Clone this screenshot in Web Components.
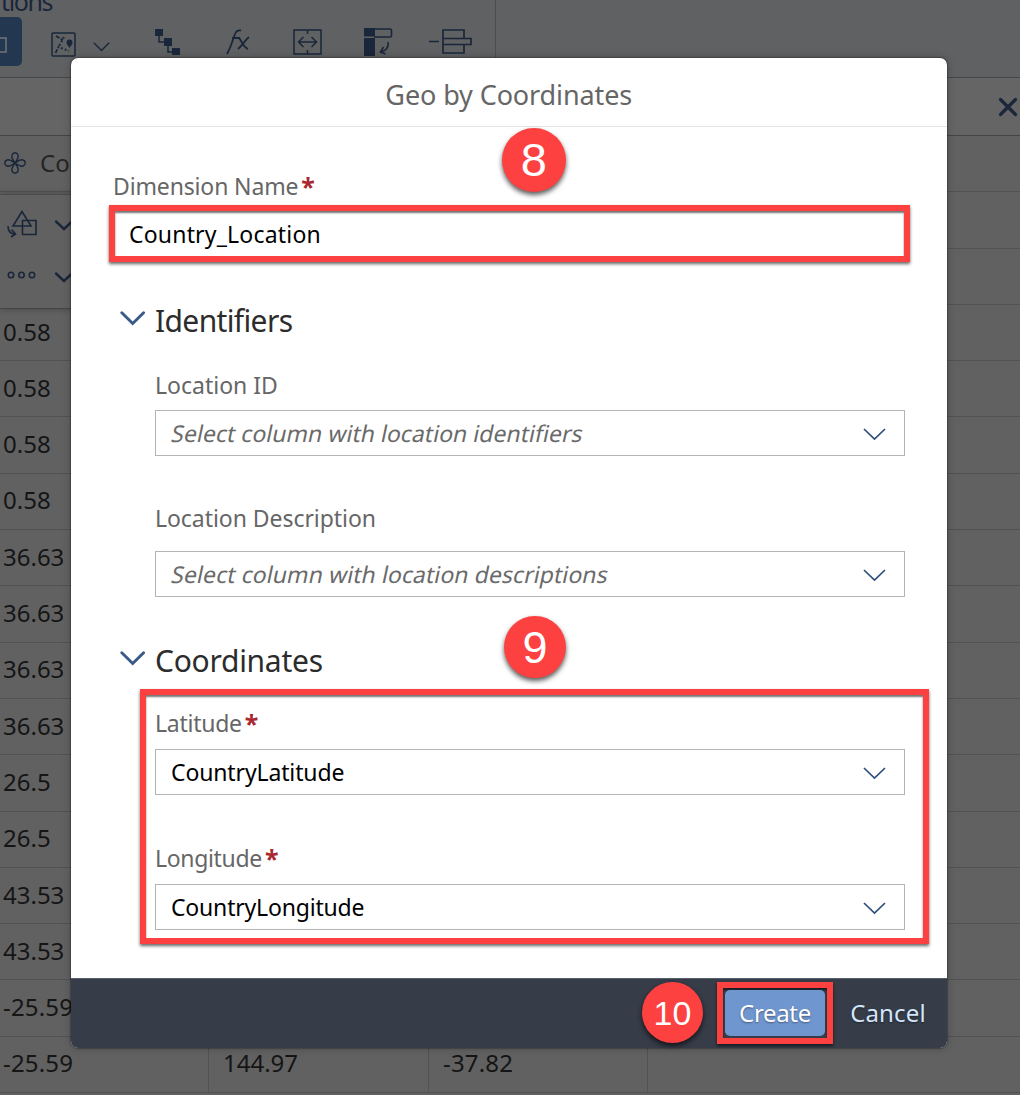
<!DOCTYPE html>
<html lang="en">
<head>
<meta charset="utf-8">
<title>Geo by Coordinates</title>
<style>
html,body{margin:0;padding:0;overflow:hidden}
body{font-family:"Noto Sans","Liberation Sans",sans-serif;width:1020px;height:1095px;background:#606060}
</style>
</head>
<body>
<geo-app></geo-app>
<script>
const define = (name, html, init) => customElements.define(name, class extends HTMLElement {
  constructor() {
    super();
    this.attachShadow({mode: 'open'}).innerHTML = html;
  }
  connectedCallback() { if (init) init.call(this, this.shadowRoot); }
});

/* One line of text set to a given width by tracking. */
define('fit-text', `<style>:host{display:block;white-space:nowrap;line-height:30px}span{display:inline-block}:host([slant]) span{transform:skewX(-12deg)}</style><span><slot></slot></span>`, function (root) {
  const target = +this.getAttribute('w');
  if (!target) return;
  const span = root.querySelector('span');
  const n = this.textContent.length;
  span.style.letterSpacing = ((target - span.offsetWidth) / n) + 'px';
});

const svg = (w, h, body, extra = '') => `<svg width="${w}" height="${h}" viewBox="0 0 ${w} ${h}" fill="none" stroke="currentColor" ${extra}>${body}</svg>`;
const icons = {
  map: svg(25, 25, `<rect x="1" y="1" width="23" height="23" rx="1" stroke-width="1.5"/><path d="M5 4l7 4M4.500 21l3.500-7" stroke-width="1.700" stroke-dasharray="4 1.500"/><path d="M13 5l-5 9M10 16l8 3" stroke-width="2" stroke-dasharray="1.800 2.200"/><path d="M18.500 16c-1-2-3-3.200-3-5.500a3 3 0 0 1 6 0c0 2.300-2 3.500-3 5.500z" fill="currentColor" stroke="none"/>`),
  thin: svg(17, 10, `<path d="M.8.800l7.700 7.700L16.200.800" stroke-width="1.400"/>`),
  tree: svg(26, 27, `<path d="M0 0h8v7H0zM9 9h8v8H9zM17 19h8v7h-8z" fill="currentColor" stroke="none"/><path d="M4 6v7h7M13 15v8h6" stroke-width="1.500"/>`),
  fx: svg(25, 26, `<path d="M1 25C5 18 7 10 9 5c1-3 3-4 6-3.500M6 9h8M13 9c3 3 4 9 9 11M23 8c-4 3-6 8-11 12" stroke-width="1.800"/>`),
  join: svg(29, 26, `<path d="M1 1h27v24H1zM14.500 1v4M14.500 21v4M6.500 13h16M10.500 8l-5 5 5 5M18.500 8l5 5-5 5" stroke-width="1.500"/>`),
  transpose: svg(29, 28, `<path d="M0 0h11v8.500H0zM0 10h11v18H0z" fill="currentColor" stroke="none"/><path d="M10 1h16q1.500 0 1.500 1.500v5Q27.500 9 26 9H10M24 14c1 5-2 9-7 10M19.500 19l-3 5 5 2" stroke-width="1.600"/>`),
  remove: svg(43, 27, `<path d="M0 13.500h10M14 10.500V2h21v8.500M14 16.500V25h21v-8.500M14 10.500h28v6H14z" stroke-width="1.700"/>`),
  flower: svg(22, 22, `<path d="M11 11C8.500 7.500 7 5.500 8 3c1-3 5-3 6 0 1 2.500-.5 4.500-3 8zM11 11c3.500-2.500 5.500-4 8-3 3 1 3 5 0 6-2.500 1-4.500-.5-8-3zM11 11c2.500 3.500 4 5.500 3 8-1 3-5 3-6 0-1-2.500.5-4.500 3-8zM11 11C7.500 13.500 5.500 15 3 14c-3-1-3-5 0-6 2.500-1 4.500.5 8 3z" stroke-width="1.400"/>`),
  shapes: svg(30, 28, `<path d="M15 1.500L6 16h18zM15.500 10.500H29v14H15.500zM1 16c0 5 2 8 7.500 8M4.500 19.500l4 4.500-4.500 3" stroke-width="1.600"/>`),
  dots: svg(29, 8, `<circle cx="4" cy="4" r="2.700"/><circle cx="14.500" cy="4" r="2.700"/><circle cx="25" cy="4" r="2.700"/>`, 'stroke-width="1.600"'),
  bold: svg(17, 11, `<path d="M1 1.500l8 7.500 8-7.500" stroke-width="2.400" stroke-linecap="round"/>`),
  section: svg(26, 15, `<path d="M1.800 1.800l10.900 10.700L23.600 1.800" stroke-width="3" stroke-linecap="round"/>`),
  select: svg(23, 12, `<path d="M1 1l10.500 10L22 1" stroke-width="1.700"/>`),
  close: svg(20, 20, `<path d="M2.500 2.500l15 15M17.500 2.500L2.500 17.500" stroke-width="3.200" stroke-linecap="round"/>`),
  cube: svg(20, 16, `<path d="M0 1h19v14H0" stroke-width="1.500"/><path d="M0 5h12v7H0M9 8l3-3" stroke-width="2"/>`)
};
define('ui-icon', `<style>:host{display:block;flex:none;line-height:0}svg{display:block;overflow:visible}</style>`, function (root) {
  root.innerHTML += icons[this.getAttribute('name')];
});

define('tool-bar', `<style>
:host{display:block;box-sizing:border-box;height:78px;background:#5f6163;border-bottom:1px solid #464748;color:#1a273a}
.group{height:77px;width:496px;box-sizing:border-box;border-right:1px solid #4b4d4f}
fit-text{font-size:25px;margin-top:-14px;margin-left:1px}
.tools{display:flex;align-items:flex-start}
.active{width:22px;height:49px;margin-top:1px;background:#233850;border-radius:0 5px 5px 0;display:flex;align-items:center;overflow:hidden;color:#707478}
</style>
<div class="group"><fit-text w="51">tions</fit-text><div class="tools">
<div class="active"><ui-icon name="cube" style="margin:7px 0 0 -13px"></ui-icon></div>
<ui-icon name="map" style="margin:16px 0 0 29px"></ui-icon>
<ui-icon name="thin" style="margin:26px 0 0 17px"></ui-icon>
<ui-icon name="tree" style="margin:13px 0 0 45px"></ui-icon>
<ui-icon name="fx" style="margin:13px 0 0 45px"></ui-icon>
<ui-icon name="join" style="margin:13px 0 0 42px"></ui-icon>
<ui-icon name="transpose" style="margin:12px 0 0 42px"></ui-icon>
<ui-icon name="remove" style="margin:12px 0 0 36px"></ui-icon>
</div></div>`);

define('data-grid', `<style>
:host{display:block;color:#151515;font-size:24px}
.row{display:grid;grid-template-columns:209px 220px 219px 1fr;height:56.31px;box-sizing:border-box;border-bottom:1px solid #525252;align-items:stretch}
.row>div{border-right:1px solid #525252;display:flex;align-items:center;padding:0 0 2px 3px}
.row>div+div{padding-left:14px}.row>div:last-child{border:0}
</style>`, function (root) {
  const values = [null, null, null, '0.58', '0.58', '0.58', '0.58', '36.63', '36.63', '36.63', '36.63', '26.5', '26.5', '43.53', '43.53', '-25.59', '-25.59'];
  const width = {4: 48, 5: 61, 6: 70};
  values.forEach((v, i) => {
    const first = i === 0
      ? '<ui-icon name="flower" style="margin-left:1px;color:#1a273a"></ui-icon><fit-text w="30" style="margin-left:14px;color:#252525">Co</fit-text>'
      : v ? `<fit-text w="${width[v.length]}">${v}</fit-text>` : '';
    const last = i === 16;
    root.innerHTML += `<div class="row"><div>${first}</div><div>${last ? '<fit-text w="75">144.97</fit-text>' : ''}</div><div>${last ? '<fit-text w="70">-37.82</fit-text>' : ''}</div><div></div></div>`;
  });
});

define('cell-menu', `<style>
:host{display:flex;flex-direction:column;box-sizing:border-box;position:absolute;left:0;top:194px;width:74px;height:115px;background:#616161;border-top:1px solid #4c4c4c;border-bottom:1px solid #454545;box-shadow:0 0 7px rgba(0,0,0,.28);color:#1a273a}
div{display:flex;align-items:center}
</style>
<div style="height:57px"><ui-icon name="shapes" style="margin-left:7px"></ui-icon><ui-icon name="bold" style="margin:4px 0 0 18px"></ui-icon></div>
<div style="height:48px"><ui-icon name="dots" style="margin:-2px 0 0 7px"></ui-icon><ui-icon name="bold" style="margin:3px 0 0 19px"></ui-icon></div>`);

define('red-frame', `<style>
:host{display:block;box-sizing:border-box;border:6px solid #fd4141;box-shadow:0 2px 3px rgba(0,0,0,.6),inset 0 2px 2px rgba(0,0,0,.55)}
</style><slot></slot>`);

define('step-badge', `<style>
:host{position:absolute;display:flex;align-items:center;justify-content:center;border-radius:50%;background:#fd4141;color:#fff;font-family:"Liberation Sans",sans-serif;box-shadow:0 3px 5px rgba(0,0,0,.65);line-height:1}
</style><slot></slot>`);

define('field-label', `<style>
:host{display:flex;height:30px;color:#666;font-size:23px}
b{color:#a9282f;font-size:25px;line-height:30px;margin-left:3px;font-weight:700}
</style>`, function (root) {
  root.innerHTML += `<fit-text w="${this.getAttribute('w')}">${this.getAttribute('text')}</fit-text>` + (this.hasAttribute('required') ? '<b>*</b>' : '');
});

define('select-box', `<style>
:host{display:flex;box-sizing:border-box;width:750px;height:46px;border:1.500px solid #b4b4b4;align-items:center;justify-content:space-between;padding:0 18px 0 15px;background:#fff;color:#000;font-size:23px}
:host([hint]){color:#6a6a6a;padding-left:16px}
ui-icon{color:#2f4f7d;margin-top:2px}
</style>`, function (root) {
  const slant = this.hasAttribute('hint') ? 'slant' : '';
  root.innerHTML += `<fit-text ${slant} w="${this.getAttribute('w')}">${this.getAttribute('text')}</fit-text><ui-icon name="select"></ui-icon>`;
});

define('section-title', `<style>
:host{display:flex;height:40px;align-items:center;color:#2c2c2c;font-size:30px;padding-left:49px}
ui-icon{color:#3a5a88;margin:-5px 9px 0 0}
fit-text{line-height:40px}
</style>`, function (root) {
  root.innerHTML += `<ui-icon name="section"></ui-icon><fit-text w="${this.getAttribute('w')}">${this.getAttribute('text')}</fit-text>`;
});

define('geo-dialog', `<style>
:host{position:absolute;left:71px;top:57.500px;width:875.500px;height:990px;box-sizing:border-box;display:flex;flex-direction:column;background:#fff;border-radius:7px;overflow:hidden;box-shadow:0 0 2px rgba(0,0,0,.8),0 0 10px rgba(0,0,0,.22)}
header{height:69.500px;box-sizing:border-box;border-bottom:1px solid #e5e5e5;display:flex;align-items:center;justify-content:center;color:#666;font-size:27px;padding-top:6px}
main{flex:1}
.name{margin:4px 0 0 38px;width:801px;height:57px}
.name fit-text{font-size:23px;color:#000;line-height:47px;padding-left:14px}
.in{margin-left:84px}
.coords{margin:8px 0 0 69px;width:789px;height:255px;padding:13px 0 0 9px}
footer{height:69.500px;background:#363c48;border-top:1px solid #56606d;box-sizing:border-box;display:flex;justify-content:flex-end;align-items:flex-start;padding:3px 20.500px 0 0;font-size:24px}
footer red-frame{width:116px;height:62px;padding:2px}
button{font:inherit;padding:0;border:0;width:100%;height:46px;border-radius:5px;background:#7096cf;color:#fff;display:flex;justify-content:center;align-items:center;text-shadow:0 1px 2px rgba(0,0,0,.4)}
footer>button{width:76px;margin-left:17px;margin-top:8px;background:none;color:#d3e5fb}
</style>
<header><fit-text w="247">Geo by Coordinates</fit-text></header>
<main>
<field-label required text="Dimension Name" w="185" style="margin:44px 0 0 42px"></field-label>
<red-frame class="name"><fit-text w="192">Country_Location</fit-text></red-frame>
<section-title text="Identifiers" w="137" style="margin-top:39px"></section-title>
<field-label class="in" text="Location ID" w="123" style="margin-top:29px"></field-label>
<select-box class="in" hint text="Select column with location identifiers" w="411" style="margin-top:10px"></select-box>
<field-label class="in" text="Location Description" w="221" style="margin-top:47px"></field-label>
<select-box class="in" hint text="Select column with location descriptions" w="436" style="margin-top:18px"></select-box>
<section-title text="Coordinates" w="168" style="margin-top:44px"></section-title>
<red-frame class="coords">
<field-label required text="Latitude" w="87"></field-label>
<select-box text="CountryLatitude" w="173" style="margin-top:11px"></select-box>
<field-label required text="Longitude" w="107" style="margin-top:48px"></field-label>
<select-box text="CountryLongitude" w="193" style="margin-top:11px"></select-box>
</red-frame>
</main>
<footer><red-frame><button><fit-text w="72">Create</fit-text></button></red-frame><button><fit-text w="76">Cancel</fit-text></button></footer>`);

define('geo-app', `<style>
:host{display:flex;flex-direction:column;position:relative;width:1020px;height:1095px;overflow:hidden;background:#616161}
.bar{height:58px;box-sizing:border-box;background:#656565;border-bottom:1px solid #444;display:flex;justify-content:flex-end;align-items:center;padding-right:2px;color:#1a273a}
</style>
<tool-bar></tool-bar>
<div class="bar"><ui-icon name="close"></ui-icon></div>
<data-grid></data-grid>
<cell-menu></cell-menu>
<geo-dialog></geo-dialog>
<step-badge style="left:501.500px;top:127.500px;width:64.500px;height:64.500px;font-size:47px">8</step-badge>
<step-badge style="left:504px;top:616px;width:62px;height:62px;font-size:45px">9</step-badge>
<step-badge style="left:642px;top:982px;width:61px;height:61px;font-size:34px">10</step-badge>`);
</script>
</body>
</html>
